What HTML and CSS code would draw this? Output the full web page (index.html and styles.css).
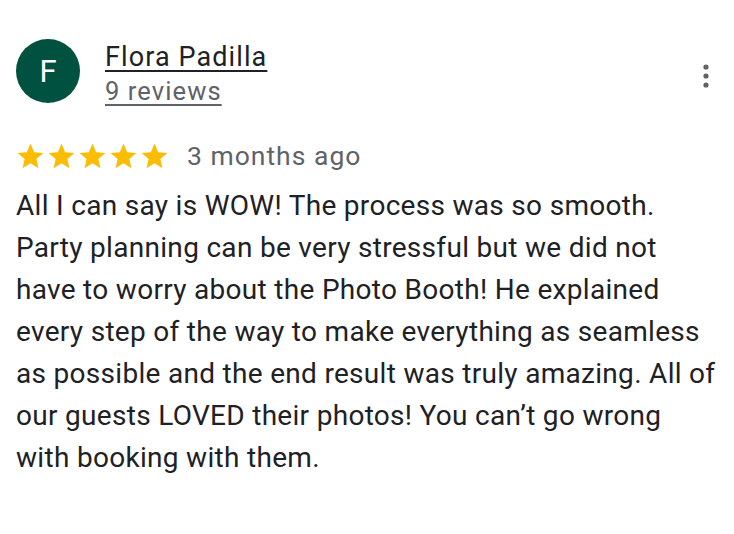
FILE: index.html
```html
<!DOCTYPE html>
<html>
<head>
<meta charset="utf-8">
<link rel="stylesheet" href="styles.css">
</head>
<body>
<div class="review">
  <div class="header">
    <div class="avatar">F</div>
    <div class="who">
      <a class="name" href="#">Flora Padilla</a>
      <a class="count" href="#">9 reviews</a>
    </div>
    <div class="more">
      <svg width="8" height="26" viewBox="0 0 8 26"><circle cx="4" cy="4" r="2.6" fill="#5f6368"/><circle cx="4" cy="13" r="2.6" fill="#5f6368"/><circle cx="4" cy="22" r="2.6" fill="#5f6368"/></svg>
    </div>
  </div>
  <div class="rating">
    <div class="stars">
      <svg viewBox="0 0 24 24" class="star"><path d="M12 17.27L18.18 21l-1.64-7.03L22 9.24l-7.19-.61L12 2 9.19 8.63 2 9.24l5.46 4.73L5.82 21z"/></svg>
      <svg viewBox="0 0 24 24" class="star"><path d="M12 17.27L18.18 21l-1.64-7.03L22 9.24l-7.19-.61L12 2 9.19 8.63 2 9.24l5.46 4.73L5.82 21z"/></svg>
      <svg viewBox="0 0 24 24" class="star"><path d="M12 17.27L18.18 21l-1.64-7.03L22 9.24l-7.19-.61L12 2 9.19 8.63 2 9.24l5.46 4.73L5.82 21z"/></svg>
      <svg viewBox="0 0 24 24" class="star"><path d="M12 17.27L18.18 21l-1.64-7.03L22 9.24l-7.19-.61L12 2 9.19 8.63 2 9.24l5.46 4.73L5.82 21z"/></svg>
      <svg viewBox="0 0 24 24" class="star"><path d="M12 17.27L18.18 21l-1.64-7.03L22 9.24l-7.19-.61L12 2 9.19 8.63 2 9.24l5.46 4.73L5.82 21z"/></svg>
    </div>
    <span class="date">3 months ago</span>
  </div>
  <p class="text">All I can say is WOW! The process was so smooth. Party planning can be very stressful but we did not have to worry about the Photo Booth! He explained every step of the way to make everything as seamless as possible and the end result was truly amazing. All of our guests LOVED their photos! You can’t go wrong with booking with them.</p>
</div>
</body>
</html>
```
FILE: styles.css
```css
html, body {
  margin: 0;
  padding: 0;
  background: #ffffff;
}
body {
  font-family: Roboto, "Liberation Sans", sans-serif;
  color: #202124;
}
.review {
  padding: 37px 12px 0 16px;
}
.header {
  display: flex;
  align-items: flex-start;
}
.avatar {
  width: 64px;
  height: 64px;
  margin-top: 2px;
  border-radius: 50%;
  background: #00513f;
  color: #ffffff;
  font-size: 31px;
  display: flex;
  align-items: center;
  justify-content: center;
  flex: none;
}
.who {
  display: flex;
  flex-direction: column;
  margin-left: 25px;
  margin-top: 3px;
  flex: 1;
}
.name {
  color: #202124;
  font-size: 27px;
  line-height: 34px;
  letter-spacing: 1.1px;
  text-decoration: underline;
  text-decoration-thickness: 2px;
  text-underline-offset: 4px;
  align-self: flex-start;
}
.count {
  color: #5f6368;
  font-size: 25.5px;
  line-height: 34px;
  letter-spacing: 1.1px;
  text-decoration: underline;
  text-decoration-thickness: 2px;
  text-underline-offset: 4px;
  align-self: flex-start;
}
.more {
  margin-top: 26px;
  margin-right: 12px;
}
.more svg { display: block; }
.rating {
  display: flex;
  align-items: center;
  margin-top: 32px;
  margin-left: -1px;
}
.stars {
  display: flex;
}
.star {
  width: 31px;
  height: 31px;
  fill: #fbbc04;
  display: block;
}
.date {
  margin-left: 17px;
  font-size: 26.5px;
  line-height: 32px;
  letter-spacing: 1px;
  color: #5f6368;
}
.text {
  margin: 13px 0 0 0;
  font-size: 28px;
  line-height: 42px;
  letter-spacing: 0.3px;
  color: #202124;
}
```
